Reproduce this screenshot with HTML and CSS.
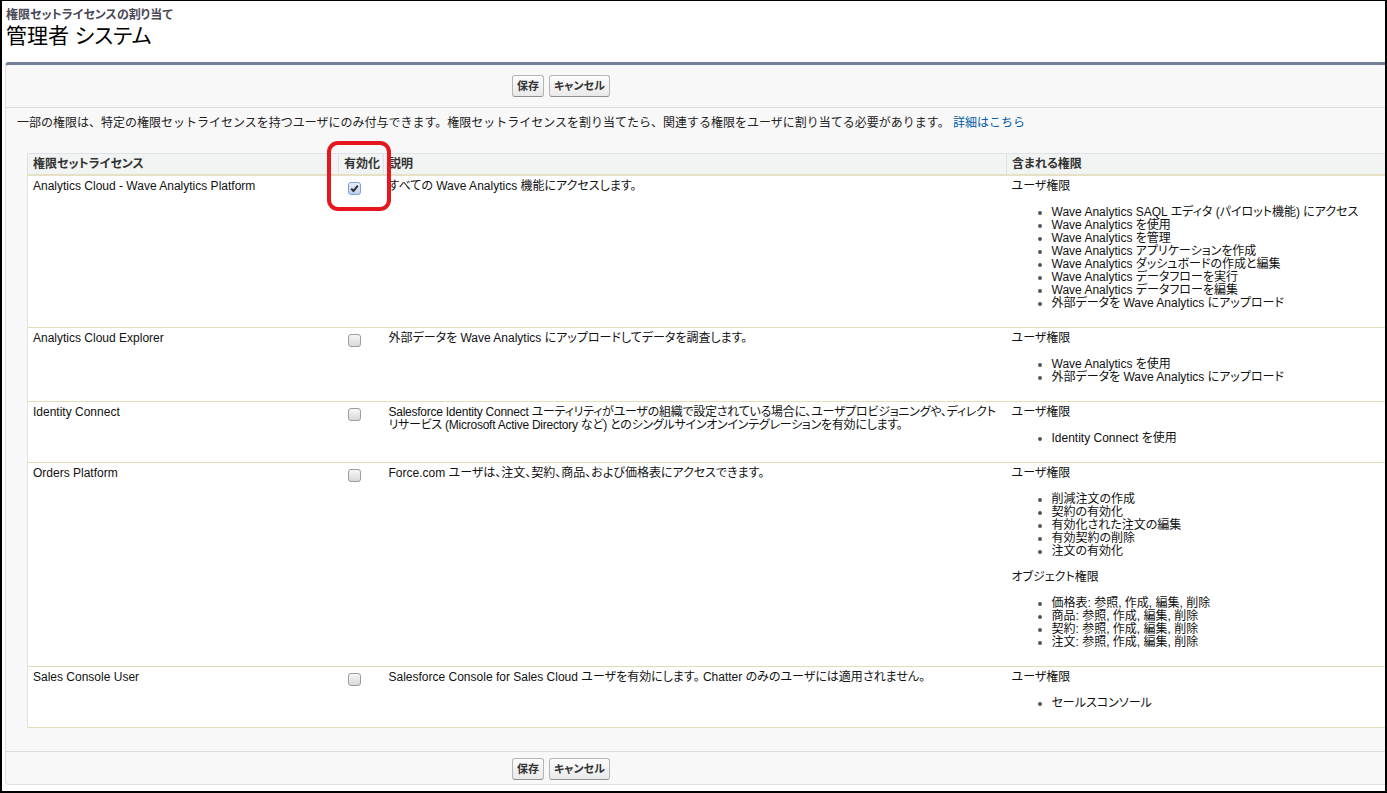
FILE: index.html
```html
<!DOCTYPE html>
<html lang="ja">
<head>
  <meta charset="UTF-8" />
  <title>権限セットライセンスの割り当て</title>
  <link rel="stylesheet" href="styles.css">
</head>
<body>
  <div class="frame">
    <div class="page-title">
      <h2 class="subtitle">権限セットライセンスの割り当て</h2>
      <h1 class="title">管理者 システム</h1>
    </div>

    <div class="block">
      <div class="block-buttons top">
        <button class="btn">保存</button>
        <button class="btn">キャンセル</button>
      </div>

      <div class="block-body">
        <p class="intro">一部の権限は、特定の権限セットライセンスを持つユーザにのみ付与できます。権限セットライセンスを割り当てたら、関連する権限をユーザに割り当てる必要があります。 <a href="#">詳細はこちら</a></p>

        <div class="list-wrap">
          <table class="list">
            <colgroup>
              <col class="c-name">
              <col class="c-check">
              <col class="c-desc">
              <col>
            </colgroup>
            <thead>
              <tr>
                <th>権限セットライセンス</th>
                <th>有効化</th>
                <th>説明</th>
                <th>含まれる権限</th>
              </tr>
            </thead>
            <tbody>
              <tr>
                <td>Analytics Cloud - Wave Analytics Platform</td>
                <td><span class="cb checked"><svg viewBox="0 0 13 13" width="13" height="13"><path d="M3.2 6.6 L5.4 9 L9.8 3.6" fill="none" stroke="#2b2b2b" stroke-width="1.9"/></svg></span></td>
                <td>すべての Wave Analytics 機能にアクセスします。</td>
                <td>
                  <div>ユーザ権限</div>
                  <ul>
                    <li>Wave Analytics SAQL エディタ (パイロット機能) にアクセス</li>
                    <li>Wave Analytics を使用</li>
                    <li>Wave Analytics を管理</li>
                    <li>Wave Analytics アプリケーションを作成</li>
                    <li>Wave Analytics ダッシュボードの作成と編集</li>
                    <li>Wave Analytics データフローを実行</li>
                    <li>Wave Analytics データフローを編集</li>
                    <li>外部データを Wave Analytics にアップロード</li>
                  </ul>
                </td>
              </tr>
              <tr>
                <td>Analytics Cloud Explorer</td>
                <td><span class="cb"></span></td>
                <td>外部データを Wave Analytics にアップロードしてデータを調査します。</td>
                <td>
                  <div>ユーザ権限</div>
                  <ul>
                    <li>Wave Analytics を使用</li>
                    <li>外部データを Wave Analytics にアップロード</li>
                  </ul>
                </td>
              </tr>
              <tr>
                <td>Identity Connect</td>
                <td><span class="cb"></span></td>
                <td class="tight">Salesforce Identity Connect ユーティリティがユーザの組織で設定されている場合に、ユーザプロビジョニングや、ディレクトリサービス (Microsoft Active Directory など) とのシングルサインオンインテグレーションを有効にします。</td>
                <td>
                  <div>ユーザ権限</div>
                  <ul>
                    <li>Identity Connect を使用</li>
                  </ul>
                </td>
              </tr>
              <tr>
                <td>Orders Platform</td>
                <td><span class="cb"></span></td>
                <td>Force.com ユーザは、注文、契約、商品、および価格表にアクセスできます。</td>
                <td>
                  <div>ユーザ権限</div>
                  <ul>
                    <li>削減注文の作成</li>
                    <li>契約の有効化</li>
                    <li>有効化された注文の編集</li>
                    <li>有効契約の削除</li>
                    <li>注文の有効化</li>
                  </ul>
                  <div>オブジェクト権限</div>
                  <ul>
                    <li>価格表: 参照, 作成, 編集, 削除</li>
                    <li>商品: 参照, 作成, 編集, 削除</li>
                    <li>契約: 参照, 作成, 編集, 削除</li>
                    <li>注文: 参照, 作成, 編集, 削除</li>
                  </ul>
                </td>
              </tr>
              <tr>
                <td>Sales Console User</td>
                <td><span class="cb"></span></td>
                <td>Salesforce Console for Sales Cloud ユーザを有効にします。 Chatter のみのユーザには適用されません。</td>
                <td>
                  <div>ユーザ権限</div>
                  <ul>
                    <li>セールスコンソール</li>
                  </ul>
                </td>
              </tr>
            </tbody>
          </table>
          <div class="callout"></div>
        </div>
      </div>

      <div class="block-buttons bottom">
        <button class="btn">保存</button>
        <button class="btn">キャンセル</button>
      </div>
    </div>
  </div>
</body>
</html>
```

FILE: styles.css
```css
/* Base */
html, body { margin:0; padding:0; background:#fff; }
body { font-family:"Liberation Sans", "Noto Sans CJK JP", sans-serif; font-size:12px; color:#222; font-feature-settings:"palt"; }
a { color:#015ba7; text-decoration:none; }

/* Screenshot frame */
.frame { width:1387px; height:793px; box-sizing:border-box; border:2px solid #000; border-top-width:1px; overflow:hidden; position:relative; }

/* Title */
.page-title { height:61px; box-sizing:border-box; padding:7px 0 0 4px; }
.subtitle { margin:0; font-size:12px; line-height:14px; font-weight:bold; color:#4a4a56; }
.title { margin:0; font-size:21px; line-height:27px; font-weight:normal; color:#000; }

/* Page block */
.block { width:1450px; margin-left:3px; background:#f8f8f8; border:1px solid #e0e0e0; border-top:3px solid #747e96; border-radius:4px; }
.block-buttons { display:flex; gap:5px; padding-left:506px; }
.block-buttons.top { padding-top:10px; padding-bottom:10px; border-bottom:1px solid #dbdbdb; }
.block-buttons.bottom { padding-top:6px; padding-bottom:4px; border-top:1px solid #dbdbdb; }
.btn { font-family:inherit; font-feature-settings:"palt"; font-size:11px; font-weight:bold; line-height:14px; color:#333; height:22px; padding:0 4px; background:linear-gradient(#fdfdfd, #e9e9e9); border:1px solid #b5b5b5; border-bottom-color:#8f8f8f; border-radius:3px; cursor:pointer; }

.block-body { padding:8px 0 23px 11px; }
.intro { margin:0 0 23px; line-height:14px; font-size:12px; color:#222; font-feature-settings:normal; }

/* List table */
.list-wrap { position:relative; margin-left:10px; }
.list { width:1430px; table-layout:fixed; border-collapse:collapse; background:#fff; border-left:1px solid #e0e3e5; }
.list col.c-name { width:311px; }
.list col.c-check { width:45px; }
.list col.c-desc { width:623px; }
.list th { text-align:left; font-size:12px; font-weight:bold; line-height:13px; color:#333; background:#f2f3f3; padding:4px 2px 3px 5px; border-top:1px solid #e0e3e5; border-left:1px solid #e0e3e5; border-bottom:2px solid #e6e1c4; }
.list td { vertical-align:top; line-height:13px; color:#111; padding:4px 2px 4px 5px; border-bottom:1px solid #e3deb8; }
.list td.tight { letter-spacing:-0.25px; }
.list ul { margin:13px 0; padding-left:40px; }
.list li { line-height:13px; }
.list li::marker { color:#555; }

/* Checkboxes */
.cb { display:block; width:13px; height:13px; box-sizing:border-box; margin:2px 0 0 4px; border:1px solid #9c9c9c; border-radius:3px; background:linear-gradient(#f6f6f6, #d9d9d9); }
.cb.checked { border-color:#7ea2dc; background:linear-gradient(#e6eefa, #bcd0ee); }
.cb svg { display:block; margin:-1px 0 0 -1px; }

/* Annotation */
.callout { position:absolute; left:300px; top:-12px; width:64px; height:70px; box-sizing:border-box; border:4px solid #e5161e; border-radius:11px; }
```
